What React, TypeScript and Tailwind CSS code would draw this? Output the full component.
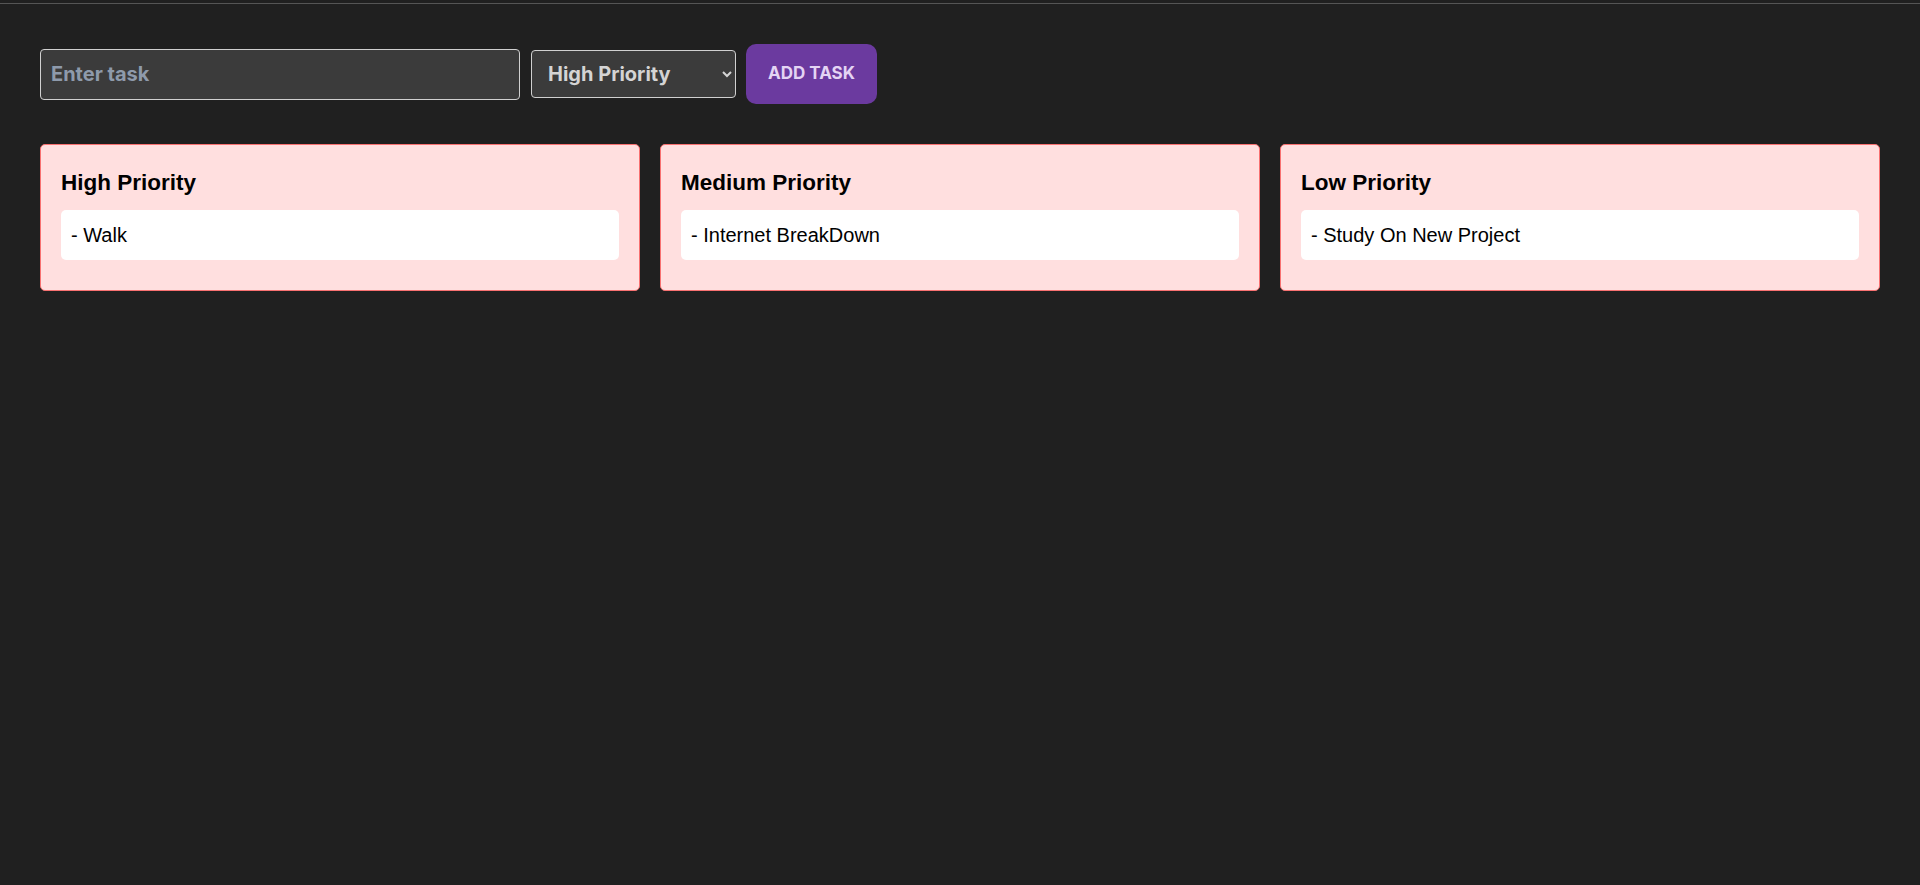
import { useState } from "react";

const columns = [
  { title: "High Priority", tasks: ["Walk"] },
  { title: "Medium Priority", tasks: ["Internet BreakDown"] },
  { title: "Low Priority", tasks: ["Study On New Project"] },
];

export default function App() {
  const [task, setTask] = useState("");
  const [priority, setPriority] = useState("high");

  return (
    <div className="min-h-screen bg-[#202020]">
      <div className="h-[4px] border-b border-[#555555]" />
      <div className="px-10 pt-10">
        <div className="flex items-center">
          <input
            value={task}
            onChange={(e) => setTask(e.target.value)}
            placeholder="Enter task"
            className="h-[51px] w-[480px] rounded-[4px] border border-[#d0d0d0] bg-[#3b3b3b] px-[10px] font-['Inter',sans-serif] text-[20px] font-bold text-[#e5e5e5] placeholder:text-[#8e9aab] outline-none"
          />
          <select
            value={priority}
            onChange={(e) => setPriority(e.target.value)}
            className="ml-[11px] h-[48px] w-[205px] rounded-[4px] border border-[#d0d0d0] bg-[#3b3b3b] pl-[12px] pr-[6px] font-['Inter',sans-serif] text-[20px] font-bold text-[#d4d4d4] outline-none"
          >
            <option value="high">High Priority</option>
            <option value="medium">Medium Priority</option>
            <option value="low">Low Priority</option>
          </select>
          <button className="ml-[10px] h-[60px] w-[131px] rounded-[10px] bg-[#6b3a9f] font-['Inter',sans-serif] text-[17px] font-bold text-[#e4d4f4]">
            ADD TASK
          </button>
        </div>

        <div className="mt-10 grid grid-cols-3 gap-5">
          {columns.map((c) => (
            <div
              key={c.title}
              className="rounded-[5px] border border-[#f87171] bg-[#ffdfdf] p-5 font-['Liberation_Sans',Arial,sans-serif] text-black"
            >
              <h3 className="mb-[10px] text-[22.5px] font-bold leading-[35px]">{c.title}</h3>
              {c.tasks.map((t) => (
                <div key={t} className="mb-[10px] rounded-[5px] bg-white p-[10px] text-[20px] leading-[30px]">
                  - {t}
                </div>
              ))}
            </div>
          ))}
        </div>
      </div>
    </div>
  );
}
